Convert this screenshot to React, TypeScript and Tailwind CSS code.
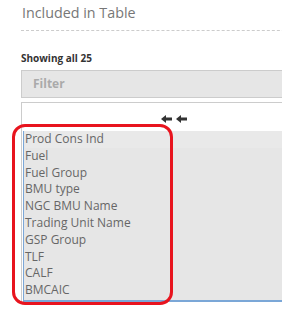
import React from 'react';

const fields = [
  'Prod Cons Ind',
  'Fuel',
  'Fuel Group',
  'BMU type',
  'NGC BMU Name',
  'Trading Unit Name',
  'GSP Group',
  'TLF',
  'CALF',
  'BMCAIC',
];

const App: React.FC = () => {
  return (
    <div className="h-[311px] w-[282px] overflow-hidden bg-white font-['Open_Sans',sans-serif]">
      <div className="relative w-[320px] pl-[21px]">
        {/* Header */}
        <h2 className="pl-[1px] pt-[3px] text-[14.3px] leading-[20px] text-[#777]">Included in Table</h2>
        <div className="mt-[7px] border-t border-dashed border-[#ccc]"></div>

        <div className="mt-[20px] text-[10px] font-bold leading-[14px] text-[#333]">Showing all 25</div>

        {/* Filter */}
        <div className="mt-[5px] flex h-[28px] items-center border border-[#ccc] bg-[#e6e6e6] pl-[11px] text-[12px] font-bold text-[#aaa]">
          Filter
        </div>

        {/* Move all */}
        <div className="mt-[4px] border-l border-t border-[#ccc]">
          <div className="flex h-[28px] items-center justify-center pl-[8px] pt-[3px]">
            <svg width="28" height="10" viewBox="0 0 28 10">
              <path d="M0 5 L5 1 L5 3.5 L11 3.5 L11 6.5 L5 6.5 L5 9 Z" fill="#333" />
              <path d="M15 5 L20 1 L20 3.5 L26 3.5 L26 6.5 L20 6.5 L20 9 Z" fill="#333" />
            </svg>
          </div>
          <ul className="ml-[1px] border-b-2 border-l border-[#7ba7d7] bg-[#e6e6e6] pb-[1px] pl-[1px] text-[12px] leading-[16.8px] text-[#666]">
            {fields.map((f, i) => (
              <li key={f} className={i === 0 ? 'bg-[#e9e9e9]' : ''}>
                {f}
              </li>
            ))}
          </ul>
        </div>

        {/* Annotation */}
        <div className="pointer-events-none absolute left-[12px] top-[124px] h-[181px] w-[161px] rounded-[13px] border-[3px] border-[#e8141e]"></div>
      </div>
    </div>
  );
};

export default App;
